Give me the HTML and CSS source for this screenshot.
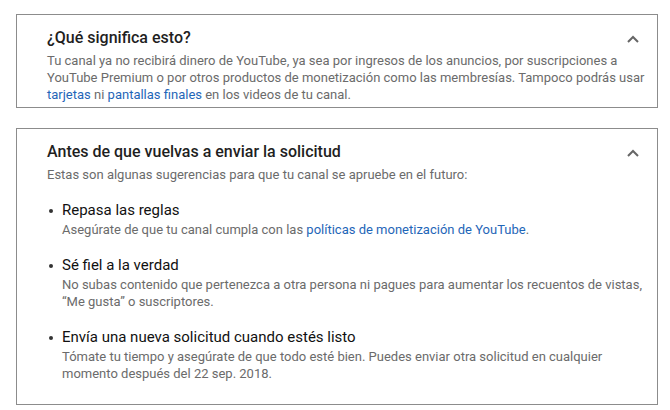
FILE: index.html
```html
<!DOCTYPE html>
<html lang="es">
<head>
    <meta charset="UTF-8">
    <meta name="viewport" content="width=device-width, initial-scale=1.0">
    <title>Monetización</title>
    <link rel="stylesheet" href="styles.css">
</head>
<body>

<div class="panel">
    <div class="panel-head">
        <h2>¿Qué significa esto?</h2>
        <svg class="chevron" width="14" height="10" viewBox="0 0 14 10"><path d="M2 8 L7 3 L12 8" fill="none" stroke="#666" stroke-width="2"/></svg>
    </div>
    <p class="text">Tu canal ya no recibirá dinero de YouTube, ya sea por ingresos de los anuncios, por suscripciones a YouTube Premium o por otros productos de monetización como las membresías. Tampoco podrás usar <a href="#">tarjetas</a> ni <a href="#">pantallas finales</a> en los videos de tu canal.</p>
</div>

<div class="panel panel-tips">
    <div class="panel-head">
        <h2>Antes de que vuelvas a enviar la solicitud</h2>
        <svg class="chevron" width="14" height="10" viewBox="0 0 14 10"><path d="M2 8 L7 3 L12 8" fill="none" stroke="#666" stroke-width="2"/></svg>
    </div>
    <p class="text">Estas son algunas sugerencias para que tu canal se apruebe en el futuro:</p>

    <ul class="tips">
        <li>
            <div class="tip-title">Repasa las reglas</div>
            <p class="text">Asegúrate de que tu canal cumpla con las <a href="#">políticas de monetización de YouTube</a>.</p>
        </li>
        <li>
            <div class="tip-title">Sé fiel a la verdad</div>
            <p class="text">No subas contenido que pertenezca a otra persona ni pagues para aumentar los recuentos de vistas, “Me gusta” o suscriptores.</p>
        </li>
        <li>
            <div class="tip-title">Envía una nueva solicitud cuando estés listo</div>
            <p class="text">Tómate tu tiempo y asegúrate de que todo esté bien. Puedes enviar otra solicitud en cualquier momento después del 22 sep. 2018.</p>
        </li>
    </ul>
</div>

</body>
</html>
```

FILE: styles.css
```css
body {
    font-family: Roboto, "Noto Sans", Arial, sans-serif;
    background-color: #fff;
    color: #222;
    margin: 0;
    padding: 14px 12px 0 16px;
}
.panel {
    border: 1px solid #8c8c8c;
    padding: 13px 10px 4px 30px;
    margin-bottom: 20px;
}
.panel-tips {
    padding-bottom: 22px;
}
.panel-head {
    display: flex;
    justify-content: space-between;
    align-items: center;
}
.panel-head h2 {
    margin: 0;
    font-size: 16px;
    font-weight: 500;
    line-height: 20px;
    color: #1f1f1f;
}
.chevron {
    margin: 2px 7px 0 0;
}
.text {
    margin: 4px 0 0;
    font-size: 13px;
    line-height: 17px;
    color: #6b6b6b;
}
.text a {
    color: #1f66b8;
    text-decoration: none;
}
.tips {
    list-style: none;
    margin: 17px 0 0;
    padding: 0;
}
.tips li {
    position: relative;
    padding-left: 15px;
    margin-bottom: 17px;
}
.tips li:last-child {
    margin-bottom: 0;
}
.tips li::before {
    content: "";
    position: absolute;
    left: 2px;
    top: 9px;
    width: 4px;
    height: 4px;
    border-radius: 50%;
    background-color: #333;
}
.tip-title {
    font-size: 15px;
    line-height: 20px;
    color: #111;
}
.tips .text {
    margin-top: 1px;
}
```
